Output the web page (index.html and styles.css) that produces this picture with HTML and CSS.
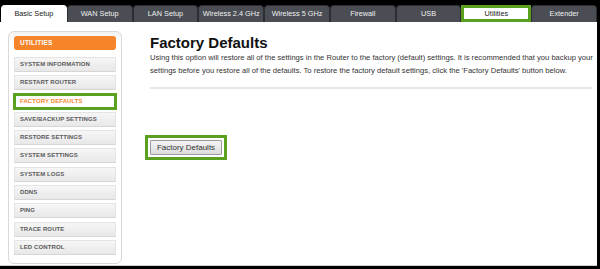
FILE: index.html
```html
<!DOCTYPE html>
<html lang="en">
<head>
  <meta charset="UTF-8" />
  <title>Utilities - Factory Defaults</title>
  <link rel="stylesheet" href="styles.css">
</head>
<body>
  <div class="frame">
    <div class="tabs">
      <div class="tab active">Basic Setup</div>
      <div class="tab">WAN Setup</div>
      <div class="tab">LAN Setup</div>
      <div class="tab">Wireless 2.4 GHz</div>
      <div class="tab">Wireless 5 GHz</div>
      <div class="tab">Firewall</div>
      <div class="tab">USB</div>
      <div class="tab active marked">Utilities</div>
      <div class="tab">Extender</div>
    </div>

    <div class="content">
      <div class="sidebar">
        <div class="side-title">UTILITIES</div>
        <div class="side-list">
          <div class="side-item">SYSTEM INFORMATION</div>
          <div class="side-item">RESTART ROUTER</div>
          <div class="side-item current">FACTORY DEFAULTS</div>
          <div class="side-item">SAVE/BACKUP SETTINGS</div>
          <div class="side-item">RESTORE SETTINGS</div>
          <div class="side-item">SYSTEM SETTINGS</div>
          <div class="side-item">SYSTEM LOGS</div>
          <div class="side-item">DDNS</div>
          <div class="side-item">PING</div>
          <div class="side-item">TRACE ROUTE</div>
          <div class="side-item">LED CONTROL</div>
        </div>
      </div>

      <div class="main">
        <h1>Factory Defaults</h1>
        <p>Using this option will restore all of the settings in the Router to the factory (default) settings. It is recommended that you backup your settings before you restore all of the defaults. To restore the factory default settings, click the 'Factory Defaults' button below.</p>
        <div class="rule"></div>
        <div class="btn-mark">
          <button>Factory Defaults</button>
        </div>
      </div>
    </div>
  </div>
</body>
</html>
```

FILE: styles.css
```css
body {
  margin: 0;
  background-color: #000;
  font-family: "Liberation Sans", Arial, sans-serif;
}
.frame {
  width: 597px;
  padding-top: 5px;
}
.tabs {
  display: flex;
  height: 17px;
  margin-left: 1px;
}
.tab {
  flex: 1;
  box-sizing: border-box;
  background-color: #4a4d53;
  border: 1px solid #2c2e32;
  border-bottom: none;
  border-radius: 4px 4px 0 0;
  color: #f0f0f0;
  font-size: 7.3px;
  line-height: 16px;
  text-align: center;
}
.tab.active {
  background-color: #fff;
  border-color: #fff;
  color: #222;
}
.tab.marked {
  border: 3px solid #5ba021;
  border-radius: 0;
  line-height: 11px;
}
.content {
  display: flex;
  height: 244px;
  box-sizing: border-box;
  background-color: #fff;
  border-bottom: 1px solid #d0d0d0;
  padding: 9px 0 0 8px;
}
.sidebar {
  width: 114px;
  height: 233px;
  box-sizing: border-box;
  border: 1px solid #d9d9d9;
  border-radius: 6px;
  background: linear-gradient(#f3f3f3, #fff 12px);
  padding: 4px 5px 0 5px;
}
.side-title {
  height: 14px;
  background-color: #f5842b;
  border-radius: 3px;
  color: #fff;
  font-size: 6.5px;
  font-weight: bold;
  line-height: 14px;
  padding-left: 6px;
  letter-spacing: 0.2px;
}
.side-list {
  display: flex;
  flex-direction: column;
  gap: 3.3px;
  margin-top: 7px;
}
.side-item {
  height: 15px;
  box-sizing: border-box;
  background: linear-gradient(#f6f6f6, #e8e8e8);
  border: 1px solid #e4e4e4;
  border-bottom-color: #d6d6d6;
  color: #5a5a5a;
  font-size: 6px;
  font-weight: bold;
  line-height: 13px;
  padding-left: 5px;
  letter-spacing: 0.1px;
}
.side-item.current {
  color: #f5842b;
  outline: 3px solid #5ba021;
  outline-offset: -2px;
  background: #fff;
}
.main {
  flex: 1;
  margin-left: 28px;
  margin-right: 3px;
  padding-top: 2.5px;
}
h1 {
  margin: 0;
  font-size: 15px;
  line-height: 17px;
  color: #111;
}
p {
  margin: 0 0 0 0;
  font-size: 7.6px;
  line-height: 13px;
  color: #333;
}
.rule {
  height: 2px;
  background-color: #e6e6e6;
  margin: 10px 2px 0 0;
}
.btn-mark {
  display: inline-block;
  margin: 46px 0 0 -5px;
  border: 3px solid #5ba021;
  padding: 2px;
}
button {
  display: block;
  width: 72px;
  height: 15px;
  padding: 0;
  border: 1px solid #9a9a9a;
  border-radius: 1px;
  background: linear-gradient(#f4f4f4, #dcdcdc);
  color: #333;
  font-family: "Liberation Sans", Arial, sans-serif;
  font-size: 8px;
}
```
